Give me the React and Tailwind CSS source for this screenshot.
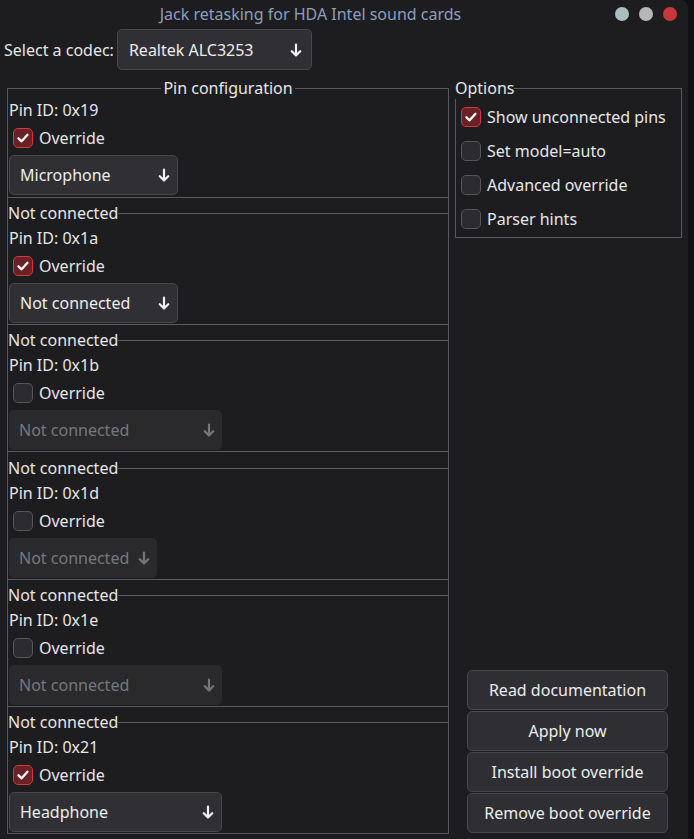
import React from "react";

const LINE = "bg-[#5a5a5e]";

function Arrow({ disabled }) {
  return (
    <svg width="12" height="14" viewBox="0 0 12 14" className="shrink-0">
      <path
        d="M6 1.5V12.5M1.8 8.2L6 12.5L10.2 8.2"
        fill="none"
        stroke={disabled ? "#77777b" : "#f0f0f2"}
        strokeWidth="2.2"
        strokeLinecap="round"
        strokeLinejoin="round"
      />
    </svg>
  );
}

function Check({ checked }) {
  return checked ? (
    <div className="w-[20px] h-[20px] rounded-[5px] border border-[#d0393d] bg-[#6a2024] flex items-center justify-center shrink-0">
      <svg width="14" height="14" viewBox="0 0 14 14">
        <path d="M2.5 7.3L5.6 10.3L11.5 3.8" fill="none" stroke="#ffffff" strokeWidth="2.3" strokeLinecap="round" strokeLinejoin="round" />
      </svg>
    </div>
  ) : (
    <div className="w-[20px] h-[20px] rounded-[5px] border border-[#56565a] bg-[#2c2c30] shrink-0" />
  );
}

function Combo({ value, width, disabled }) {
  return (
    <div
      className={
        "h-[40px] rounded-[5px] flex items-center pl-[10px] pr-[7px] " +
        (disabled
          ? "bg-[#2a2a2d] text-[#77777b]"
          : "bg-[#303034] border border-[#48484c] text-[#ececee]")
      }
      style={{ width }}
    >
      <span className="whitespace-nowrap">{value}</span>
      <div className="flex-1 min-w-[4px]" />
      <Arrow disabled={disabled} />
    </div>
  );
}

function PinGroup({ title, id, checked, value, comboW, disabled, last, gap }) {
  return (
    <div className={title ? (gap ? "mt-[5px]" : "mt-[4px]") : ""}>
      {title && (
        <div className="h-[22px] flex items-center">
          <span className="leading-[22px] whitespace-nowrap">{title}</span>
          <div className={"flex-1 h-px " + LINE} />
        </div>
      )}
      <div className={(title ? "pb-[1px] " : "pb-[2px] ") + (last ? "" : "border-b border-[#5a5a5e]")}>
        <div className={"h-[22px] leading-[22px] pl-[1px] " + (title ? "mt-[3px]" : "")}>Pin ID: {id}</div>
        <div className="h-[22px] mt-[6px] flex items-center gap-[6px] pl-[5px]">
          <Check checked={checked} />
          <span className="leading-[22px]">Override</span>
        </div>
        <div className="mt-[6px] pl-[1px]">
          <Combo value={value} width={comboW} disabled={disabled} />
        </div>
      </div>
    </div>
  );
}

function Btn({ children }) {
  return (
    <div className="h-[40px] rounded-[5px] bg-[#2f2f33] border border-[#47474b] flex items-center justify-center text-[#ececee]">
      {children}
    </div>
  );
}

export default function App() {
  const opts = [
    ["Show unconnected pins", true],
    ["Set model=auto", false],
    ["Advanced override", false],
    ["Parser hints", false],
  ];
  return (
    <div
      className="w-[694px] h-[839px] bg-[#111113] overflow-hidden text-[16px] leading-[22px] text-[#e6e6e8]"
      style={{ fontFamily: '"Noto Sans", "DejaVu Sans", sans-serif' }}
    >
      <div className="w-[688px] h-[839px] bg-[#1d1d20] rounded-tr-[8px] flex flex-col">
        {/* title bar */}
        <div className="h-[28px] flex items-center">
          <div className="flex-1 text-center text-[16px] text-[#8c9ebd] pl-[14px]">
            Jack retasking for HDA Intel sound cards
          </div>
          <div className="flex items-center gap-[10px] pr-[11px] pl-[8px]">
            <div className="w-[14px] h-[14px] rounded-full bg-[#a9bec1]" />
            <div className="w-[14px] h-[14px] rounded-full bg-[#b6b6b6]" />
            <div className="w-[14px] h-[14px] rounded-full bg-[#c8383b]" />
          </div>
        </div>

        {/* codec row */}
        <div className="mt-[1px] h-[41px] flex items-center pl-[4px] gap-[3px]">
          <span className="whitespace-nowrap">Select a codec:</span>
          <div className="w-[195px] h-[41px] rounded-[5px] bg-[#303034] border border-[#48484c] flex items-center pl-[11px] pr-[9px] text-[#ececee]">
            <span>Realtek ALC3253</span>
            <div className="flex-1" />
            <Arrow />
          </div>
        </div>

        {/* main */}
        <div className="mt-[7px] flex-1 flex pl-[7px] pb-[5px] gap-[6px]">
          {/* pin configuration */}
          <div className="w-[442px] flex flex-col">
            <div className="h-[22px] flex items-center">
              <div className={"w-px h-[11px] self-end " + LINE} />
              <div className={"flex-1 h-px " + LINE} />
              <span className="px-[2px] whitespace-nowrap">Pin configuration</span>
              <div className={"flex-1 h-px " + LINE} />
              <div className={"w-px h-[11px] self-end " + LINE} />
            </div>
            <div className="flex-1 border-x border-b border-[#5a5a5e] overflow-hidden">
              <PinGroup id="0x19" checked value="Microphone" comboW={169} />
              <PinGroup title="Not connected" id="0x1a" checked value="Not connected" comboW={169} />
              <PinGroup title="Not connected" id="0x1b" value="Not connected" comboW={213} disabled />
              <PinGroup title="Not connected" id="0x1d" value="Not connected" comboW={148} disabled gap />
              <PinGroup title="Not connected" id="0x1e" value="Not connected" comboW={213} disabled />
              <PinGroup title="Not connected" id="0x21" checked value="Headphone" comboW={213} last />
            </div>
          </div>

          {/* right column */}
          <div className="w-[227px] flex flex-col">
            <div className="h-[22px] flex items-center">
              <span className="whitespace-nowrap">Options</span>
              <div className={"flex-1 h-px " + LINE} />
              <div className={"w-px h-[11px] self-end " + LINE} />
            </div>
            <div className="border-x border-b border-[#5a5a5e] pt-[7px] pb-[7px] pl-[5px] flex flex-col gap-[12px]">
              {opts.map(([label, on]) => (
                <div key={label} className="h-[22px] flex items-center gap-[6px]">
                  <Check checked={on} />
                  <span className="whitespace-nowrap">{label}</span>
                </div>
              ))}
            </div>
            <div className="flex-1" />
            <div className="flex flex-col gap-[1px] pl-[12px] pr-[14px] pb-[1px]">
              <Btn>Read documentation</Btn>
              <Btn>Apply now</Btn>
              <Btn>Install boot override</Btn>
              <Btn>Remove boot override</Btn>
            </div>
          </div>
        </div>
      </div>
    </div>
  );
}
